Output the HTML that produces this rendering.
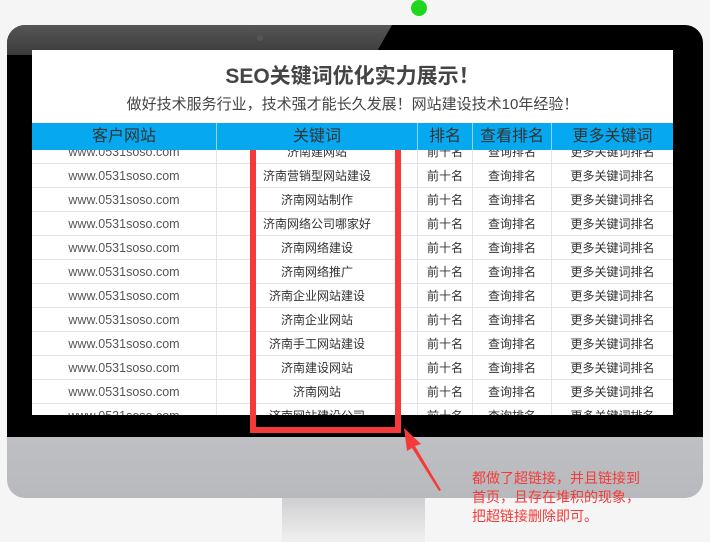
<!DOCTYPE html>
<html><head><meta charset="utf-8"><style>
*{margin:0;padding:0;box-sizing:border-box}
body{width:710px;height:542px;overflow:hidden;background:#f5f5f5;position:relative;font-family:"Liberation Sans","Noto Sans CJK SC",sans-serif}
.abs{position:absolute}
.frame{left:7px;top:25px;width:696px;height:473px;border-radius:18px;background:linear-gradient(#dcdcde,#c8c9cc 70%,#b8b9bc);overflow:hidden}
.bezel{left:0;top:0;width:696px;height:412px;background:#000}
.screen{left:32px;top:50px;width:641px;height:365px;background:#fff;overflow:hidden}
.row{position:absolute;left:0;width:641px;height:24px;border-bottom:1px solid #e3e3e3;font-size:12px;color:#333}
.row div,.hd div{position:absolute;top:0;height:100%;text-align:center;border-right:1px solid #e3e3e3}
.hd{position:absolute;left:0;top:73px;width:641px;height:27px;background:#06a8f0;color:#333;font-size:16px;line-height:27px;z-index:2}
.hd div{border-right:1px solid #8fd6f7}
.c1{left:0;width:185px}.c2{left:185px;width:201px}.c3{left:386px;width:55px}.c4{left:441px;width:79px}.c5{left:520px;width:121px;border-right:none!important}
.row div{line-height:24px}
.row .c1{color:#555;font-size:12.5px}
</style></head><body>
<div class="abs" style="left:411px;top:0;width:16px;height:16px;border-radius:50%;background:#1ed71e"></div>
<div class="abs frame">
 <div class="abs bezel"></div>
 <svg class="abs" style="left:0;top:0" width="696" height="412"><defs><linearGradient id="g" x1="0" y1="0" x2="0" y2="1"><stop offset="0" stop-color="#555"/><stop offset="1" stop-color="#3c3c3c"/></linearGradient></defs><polygon points="0,0 385,0 368,30 0,30" fill="url(#g)"/></svg>
 <div class="abs" style="left:250px;top:10px;width:6px;height:6px;border-radius:50%;background:#555"></div>
</div>
<div class="abs" style="left:282px;top:498px;width:143px;height:44px;background:linear-gradient(#cfcfd1,#f0f0f0)"></div>
<div class="abs screen">
 <div class="abs" style="left:0;top:10px;width:641px;text-align:center;font-size:21px;font-weight:bold;color:#444">SEO关键词优化实力展示！</div>
 <div class="abs" style="left:0;top:43px;width:641px;text-align:center;font-size:15px;color:#444">做好技术服务行业，技术强才能长久发展！网站建设技术10年经验！</div>
 <div class="hd"><div class="c1">客户网站</div><div class="c2">关键词</div><div class="c3">排名</div><div class="c4">查看排名</div><div class="c5">更多关键词</div></div>
 <div class="row" style="top:90px"><div class="c1">www.0531soso.com</div><div class="c2">济南建网站</div><div class="c3">前十名</div><div class="c4">查询排名</div><div class="c5">更多关键词排名</div></div>
 <div class="row" style="top:114px"><div class="c1">www.0531soso.com</div><div class="c2">济南营销型网站建设</div><div class="c3">前十名</div><div class="c4">查询排名</div><div class="c5">更多关键词排名</div></div>
 <div class="row" style="top:138px"><div class="c1">www.0531soso.com</div><div class="c2">济南网站制作</div><div class="c3">前十名</div><div class="c4">查询排名</div><div class="c5">更多关键词排名</div></div>
 <div class="row" style="top:162px"><div class="c1">www.0531soso.com</div><div class="c2">济南网络公司哪家好</div><div class="c3">前十名</div><div class="c4">查询排名</div><div class="c5">更多关键词排名</div></div>
 <div class="row" style="top:186px"><div class="c1">www.0531soso.com</div><div class="c2">济南网络建设</div><div class="c3">前十名</div><div class="c4">查询排名</div><div class="c5">更多关键词排名</div></div>
 <div class="row" style="top:210px"><div class="c1">www.0531soso.com</div><div class="c2">济南网络推广</div><div class="c3">前十名</div><div class="c4">查询排名</div><div class="c5">更多关键词排名</div></div>
 <div class="row" style="top:234px"><div class="c1">www.0531soso.com</div><div class="c2">济南企业网站建设</div><div class="c3">前十名</div><div class="c4">查询排名</div><div class="c5">更多关键词排名</div></div>
 <div class="row" style="top:258px"><div class="c1">www.0531soso.com</div><div class="c2">济南企业网站</div><div class="c3">前十名</div><div class="c4">查询排名</div><div class="c5">更多关键词排名</div></div>
 <div class="row" style="top:282px"><div class="c1">www.0531soso.com</div><div class="c2">济南手工网站建设</div><div class="c3">前十名</div><div class="c4">查询排名</div><div class="c5">更多关键词排名</div></div>
 <div class="row" style="top:306px"><div class="c1">www.0531soso.com</div><div class="c2">济南建设网站</div><div class="c3">前十名</div><div class="c4">查询排名</div><div class="c5">更多关键词排名</div></div>
 <div class="row" style="top:330px"><div class="c1">www.0531soso.com</div><div class="c2">济南网站</div><div class="c3">前十名</div><div class="c4">查询排名</div><div class="c5">更多关键词排名</div></div>
 <div class="row" style="top:354px"><div class="c1">www.0531soso.com</div><div class="c2">济南网站建设公司</div><div class="c3">前十名</div><div class="c4">查询排名</div><div class="c5">更多关键词排名</div></div>
</div>
<div class="abs" style="left:250px;top:136px;width:151px;height:297px;border:6px solid #f53a3a"></div>
<svg class="abs" style="left:395px;top:420px" width="60" height="80"><polygon points="9,8 26,24 20,26 46,70 44,71 17,28 12,31" fill="#f53a3a"/></svg>
<div class="abs" style="left:472px;top:469px;font-size:14px;line-height:19px;color:#f53a3a">都做了超链接，并且链接到<br>首页，且存在堆积的现象，<br>把超链接删除即可。</div>
</body></html>
